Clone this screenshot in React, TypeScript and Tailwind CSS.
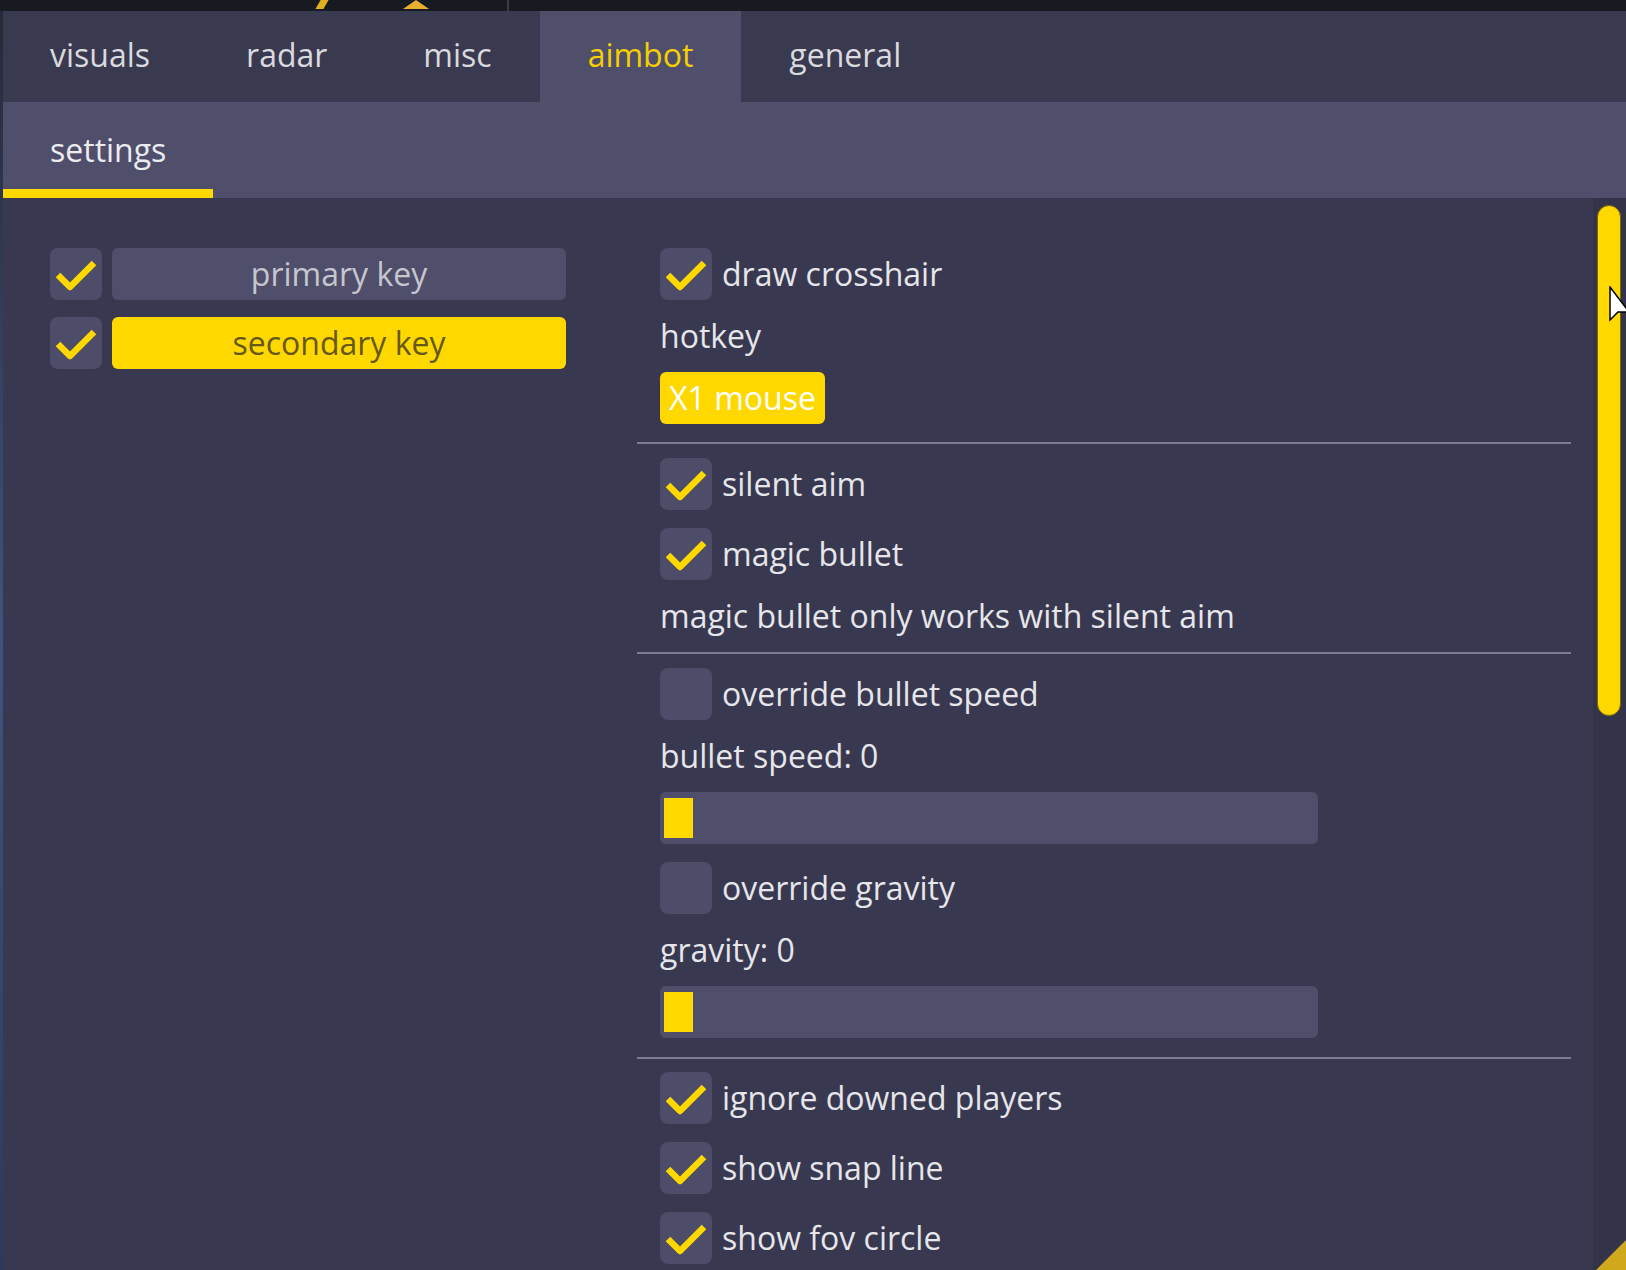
const FONT = "font-['Open_Sans',_'Noto_Sans',_sans-serif]"

function Check({ on }: { on: boolean }) {
    return (
        <div className="w-[52px] h-[52px] shrink-0 rounded-lg bg-[#4d4d69] flex items-center justify-center">
            {on && (
                <svg width="52" height="52" viewBox="0 0 52 52">
                    <polyline
                        points="8,27 20,39 44,15"
                        fill="none"
                        stroke="#ffd800"
                        strokeWidth="6.5"
                        strokeLinejoin="round"
                    />
                </svg>
            )}
        </div>
    )
}

function CheckRow({ label, on }: { label: string; on: boolean }) {
    return (
        <div className="flex items-center gap-[10px] h-[52px]">
            <Check on={on} />
            <span className="text-[#e6e6ea]">{label}</span>
        </div>
    )
}

function Label({ children }: { children: React.ReactNode }) {
    return <div className="h-[36px] leading-[36px] text-[#e6e6ea]">{children}</div>
}

function Slider() {
    return (
        <div className="w-[658px] h-[52px] rounded-md bg-[#4f4f6b] flex items-center pl-[4px]">
            <div className="w-[29px] h-[40px] bg-[#ffd800]" />
        </div>
    )
}

function Separator({ last }: { last?: boolean }) {
    return <div className={last ? 'h-[2px] bg-[#7c7c92] mt-[19px] mb-[13px]' : 'h-[2px] bg-[#7c7c92] mt-[18px] mb-[14px]'} />
}

export default function App() {
    const tabs = ['visuals', 'radar', 'misc', 'aimbot', 'general']
    return (
        <div className={`w-[1626px] h-[1270px] bg-[#171a21] flex flex-col overflow-hidden relative ${FONT} text-[32px] font-medium`}>
            {/* game background strip */}
            <div className="h-[11px] shrink-0 relative">
                <div className="absolute left-[318px] top-0 w-[8px] h-[9px] bg-[#e0b020] -skew-x-[30deg]" />
                <svg className="absolute left-[403px] top-0" width="26" height="9" viewBox="0 0 26 9">
                    <polygon points="13,0 26,9 0,9" fill="#e8b030" />
                </svg>
                <div className="absolute left-[507px] top-0 w-[2px] h-[11px] bg-[#3a3d45]" />
            </div>
            <div className="flex-1 flex">
                <div className="w-[3px] bg-gradient-to-b from-[#262a36] via-[#3d5580] to-[#2b3a5c]" />
                <div className="flex-1 flex flex-col">
                    {/* main tabs */}
                    <div className="h-[91px] bg-[#393950] flex">
                        {tabs.map((t, i) => (
                            <div
                                key={t}
                                className={
                                    (i === 0 ? 'pl-[47px] pr-[48px]' : 'px-[48px]') +
                                    (t === 'aimbot'
                                        ? ' flex items-center pb-[3px] bg-[#4f4f6c] text-[#f5cf00]'
                                        : ' flex items-center pb-[3px] text-[#d9d9de]')
                                }
                            >
                                {t}
                            </div>
                        ))}
                    </div>
                    {/* sub tabs */}
                    <div className="h-[96px] bg-[#4f4f6c] flex">
                        <div className="px-[47px] flex items-center relative text-[#ececef]">
                            settings
                            <div className="absolute left-0 right-0 bottom-0 h-[9px] bg-[#ffd800]" />
                        </div>
                    </div>
                    {/* content */}
                    <div className="flex-1 flex bg-[#383850]">
                        <div className="flex-1 flex pt-[50px]">
                            <div className="w-[634px] pl-[47px] flex flex-col gap-[17px]">
                                <div className="flex gap-[10px]">
                                    <Check on />
                                    <div className="w-[454px] h-[52px] rounded-md bg-[#4f4f6b] flex items-center justify-center text-[#c6c6ce]">
                                        primary key
                                    </div>
                                </div>
                                <div className="flex gap-[10px]">
                                    <Check on />
                                    <div className="w-[454px] h-[52px] rounded-md bg-[#ffd800] flex items-center justify-center text-[#66581a]">
                                        secondary key
                                    </div>
                                </div>
                            </div>
                            <div className="w-[934px] flex flex-col">
                                <div className="pl-[23px] flex flex-col gap-[18px]">
                                    <CheckRow label="draw crosshair" on />
                                    <Label>hotkey</Label>
                                    <div className="w-[165px] h-[52px] rounded-md bg-[#ffd800] flex items-center justify-center text-white">
                                        X1 mouse
                                    </div>
                                </div>
                                <Separator />
                                <div className="pl-[23px] flex flex-col gap-[18px]">
                                    <CheckRow label="silent aim" on />
                                    <CheckRow label="magic bullet" on />
                                    <Label>magic bullet only works with silent aim</Label>
                                </div>
                                <Separator />
                                <div className="pl-[23px] flex flex-col gap-[18px]">
                                    <CheckRow label="override bullet speed" on={false} />
                                    <Label>bullet speed: 0</Label>
                                    <Slider />
                                    <CheckRow label="override gravity" on={false} />
                                    <Label>gravity: 0</Label>
                                    <Slider />
                                </div>
                                <Separator last />
                                <div className="pl-[23px] flex flex-col gap-[18px]">
                                    <CheckRow label="ignore downed players" on />
                                    <CheckRow label="show snap line" on />
                                    <CheckRow label="show fov circle" on />
                                </div>
                            </div>
                        </div>
                        {/* scrollbar */}
                        <div className="w-[33px] bg-[#33334a] pt-[7px] pl-[4px] pr-[5px]">
                            <div className="h-[511px] rounded-full bg-[#ffd800] border border-[#7a6510]" />
                        </div>
                    </div>
                </div>
            </div>
            {/* resize grip */}
            <svg className="absolute right-0 bottom-0" width="30" height="30" viewBox="0 0 30 30">
                <polygon points="30,0 30,30 0,30" fill="#cfa81c" />
            </svg>
            {/* mouse cursor */}
            <svg className="absolute left-[1609px] top-[286px]" width="20" height="40" viewBox="0 0 20 40">
                <polygon points="1,1 1,34 9,26 20,26" fill="#ffffff" stroke="#000000" strokeWidth="1.5" />
            </svg>
        </div>
    )
}
